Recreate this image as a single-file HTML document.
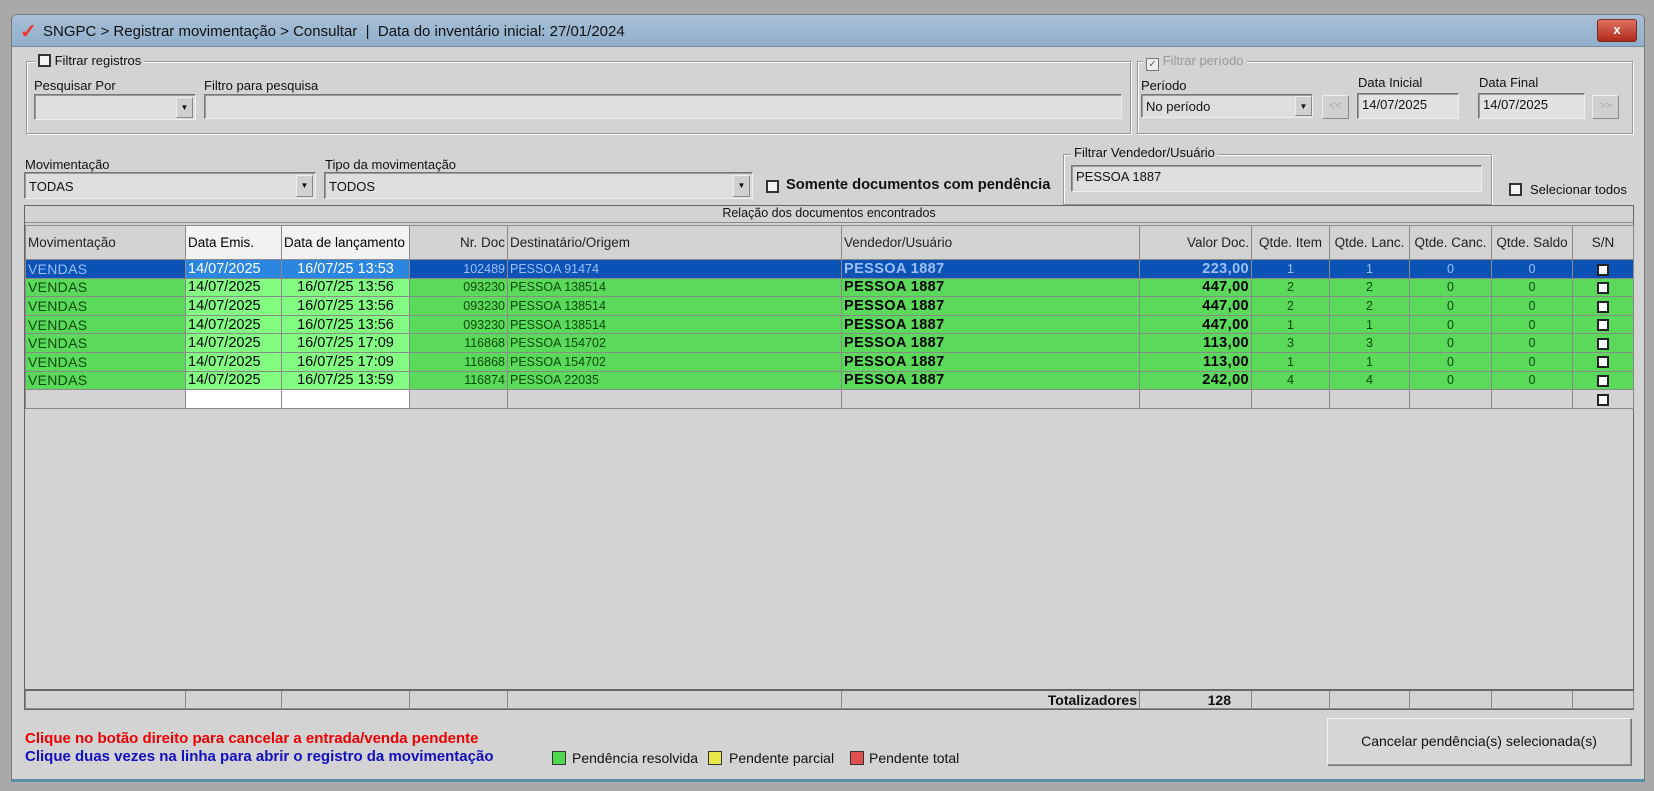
<!DOCTYPE html>
<html><head><meta charset="utf-8"><style>
*{box-sizing:border-box;margin:0;padding:0}
body{width:1654px;height:791px;background:#a9a9a9;font-family:"Liberation Sans",sans-serif;font-size:13px;color:#111;position:relative;overflow:hidden}
.a{position:absolute}
.win{left:11px;top:14px;width:1634px;height:768px;background:#d3d3d3;border:1px solid #777;border-radius:6px 6px 0 0;border-bottom:3px solid #5a8fa8}
.title{left:12px;top:15px;width:1632px;height:32px;background:linear-gradient(#a8bfd6,#90afcc);border-radius:5px 5px 0 0;border-bottom:1px solid #7a8ea0}
.grp{border:1px solid #999;box-shadow:inset 1px 1px 0 #fff,1px 1px 0 #fff}
.lg{background:#d3d3d3;padding:0 3px;font-size:13px}
.inp{background:#dedede;border:1px solid #777;border-right-color:#eee;border-bottom-color:#eee;box-shadow:inset 1px 1px 0 #999;padding:3px 4px;font-size:13px}
.dd{width:17px;background:#d0d0d0;border:1px solid #888;border-top-color:#eee;border-left-color:#eee;font-size:8px;text-align:center;line-height:20px}
.cb{width:13px;height:13px;border:2px solid #333;background:#f4f4f4}
table{border-collapse:collapse;table-layout:fixed;position:absolute;left:25px;font-size:12.5px}
td{border:1px solid #8a8a8a;height:18.6px;padding:0 2px;white-space:nowrap;overflow:hidden}
td.d{font-size:14.5px;line-height:16px}
td.v{font-size:14px;letter-spacing:.3px}
.sel td{background:#0b52b6;color:#9cc0ff}
.sel td.d{background:#2a86e0;color:#fff}
.g td{background:#5bd95b;color:#0a4a0a}
.g td.d{background:#82fd82;color:#000}
.g td.b,.sel td.b{font-weight:bold;font-size:14.5px;letter-spacing:.4px;line-height:16px}
.g td.b{color:#000}
.r{text-align:right}.c{text-align:center}
.sq{display:inline-block;width:12px;height:12px;border:2px solid #222;background:#fff;vertical-align:middle}
.hd td{height:34px;background:#d3d3d3;color:#222;font-size:13.5px}
.hd td.w{background:#f2f2f2;color:#000}
</style></head><body>
<div class="a win"></div>
<div class="a title"></div>
<div class="a" style="left:20px;top:19px;color:#e33;font-size:20px;font-weight:bold">✓</div>
<div class="a" style="left:43px;top:23px;font-size:15px;color:#111">SNGPC &gt; Registrar movimentação &gt; Consultar &nbsp;| &nbsp;Data do inventário inicial: 27/01/2024</div>
<div class="a" style="left:1597px;top:19px;width:40px;height:23px;background:linear-gradient(#e07060,#b02a1a);border:1px solid #7a2a20;border-radius:3px;color:#fff;text-align:center;font-weight:bold;line-height:20px">x</div>

<div class="a grp" style="left:26px;top:61px;width:1105px;height:73px"></div>
<div class="a lg" style="left:35px;top:53px"><span class="cb" style="display:inline-block;vertical-align:-2px"></span> Filtrar registros</div>
<div class="a" style="left:34px;top:78px">Pesquisar Por</div>
<div class="a" style="left:204px;top:78px">Filtro para pesquisa</div>
<div class="a inp" style="left:34px;top:94px;width:162px;height:26px"></div>
<div class="a dd" style="left:176px;top:97px;height:21px">▼</div>
<div class="a inp" style="left:204px;top:94px;width:918px;height:25px"></div>

<div class="a grp" style="left:1137px;top:61px;width:496px;height:73px"></div>
<div class="a lg" style="left:1143px;top:53px;color:#999"><span style="display:inline-block;vertical-align:-2px;width:13px;height:13px;border:1px solid #777;background:#eee;font-size:10px;line-height:11px;text-align:center;color:#666">✓</span> Filtrar período</div>
<div class="a" style="left:1141px;top:78px">Período</div>
<div class="a" style="left:1358px;top:75px">Data Inicial</div>
<div class="a" style="left:1479px;top:75px">Data Final</div>
<div class="a inp" style="left:1141px;top:94px;width:172px;height:24px;padding-top:4px">No período</div>
<div class="a dd" style="left:1295px;top:96px;height:20px">▼</div>
<div class="a dd" style="left:1322px;top:95px;width:27px;height:24px;color:#aaa;font-size:11px">&lt;&lt;</div>
<div class="a inp" style="left:1357px;top:93px;width:102px;height:26px;background:#e2e2e2">14/07/2025</div>
<div class="a inp" style="left:1478px;top:93px;width:107px;height:26px;background:#e2e2e2">14/07/2025</div>
<div class="a dd" style="left:1592px;top:95px;width:27px;height:24px;color:#aaa;font-size:11px">&gt;&gt;</div>

<div class="a" style="left:25px;top:157px">Movimentação</div>
<div class="a" style="left:325px;top:157px">Tipo da movimentação</div>
<div class="a inp" style="left:24px;top:172px;width:292px;height:27px;padding-top:6px">TODAS</div>
<div class="a dd" style="left:296px;top:175px;height:22px">▼</div>
<div class="a inp" style="left:324px;top:172px;width:429px;height:27px;padding-top:6px">TODOS</div>
<div class="a dd" style="left:733px;top:175px;height:22px">▼</div>
<div class="a cb" style="left:766px;top:180px"></div>
<div class="a" style="left:786px;top:177px;font-weight:bold;font-size:14.7px">Somente documentos com pendência</div>
<div class="a grp" style="left:1063px;top:154px;width:429px;height:51px"></div>
<div class="a lg" style="left:1071px;top:145px">Filtrar Vendedor/Usuário</div>
<div class="a inp" style="left:1071px;top:165px;width:411px;height:27px">PESSOA 1887</div>
<div class="a cb" style="left:1509px;top:183px"></div>
<div class="a" style="left:1530px;top:182px">Selecionar todos</div>

<div class="a" style="left:24px;top:205px;width:1610px;height:505px;border:1px solid #666;background:#d3d3d3"></div>
<div class="a" style="left:25px;top:206px;width:1608px;height:17px;border-bottom:1px solid #888;text-align:center;font-size:12.5px">Relação dos documentos encontrados</div>
<table style="top:225px;width:1608px">
<colgroup><col style="width:160px"><col style="width:96px"><col style="width:128px"><col style="width:98px"><col style="width:334px"><col style="width:298px"><col style="width:112px"><col style="width:78px"><col style="width:80px"><col style="width:82px"><col style="width:81px"><col style="width:61px"></colgroup>
<tr class="hd"><td>Movimentação</td><td class="w">Data Emis.</td><td class="w">Data de lançamento</td><td class="r">Nr. Doc</td><td>Destinatário/Origem</td><td>Vendedor/Usuário</td><td class="r">Valor Doc.</td><td class="c">Qtde. Item</td><td class="c">Qtde. Lanc.</td><td class="c">Qtde. Canc.</td><td class="c">Qtde. Saldo</td><td class="c">S/N</td></tr>
<tr class="sel"><td class="v">VENDAS</td><td class="d">14/07/2025</td><td class="d c">16/07/25 13:53</td><td class="r">102489</td><td>PESSOA 91474</td><td class="b">PESSOA 1887</td><td class="r b">223,00</td><td class="c">1</td><td class="c">1</td><td class="c">0</td><td class="c">0</td><td class="c"><span class="sq"></span></td></tr>
<tr class="g"><td class="v">VENDAS</td><td class="d">14/07/2025</td><td class="d c">16/07/25 13:56</td><td class="r">093230</td><td>PESSOA 138514</td><td class="b">PESSOA 1887</td><td class="r b">447,00</td><td class="c">2</td><td class="c">2</td><td class="c">0</td><td class="c">0</td><td class="c"><span class="sq"></span></td></tr>
<tr class="g"><td class="v">VENDAS</td><td class="d">14/07/2025</td><td class="d c">16/07/25 13:56</td><td class="r">093230</td><td>PESSOA 138514</td><td class="b">PESSOA 1887</td><td class="r b">447,00</td><td class="c">2</td><td class="c">2</td><td class="c">0</td><td class="c">0</td><td class="c"><span class="sq"></span></td></tr>
<tr class="g"><td class="v">VENDAS</td><td class="d">14/07/2025</td><td class="d c">16/07/25 13:56</td><td class="r">093230</td><td>PESSOA 138514</td><td class="b">PESSOA 1887</td><td class="r b">447,00</td><td class="c">1</td><td class="c">1</td><td class="c">0</td><td class="c">0</td><td class="c"><span class="sq"></span></td></tr>
<tr class="g"><td class="v">VENDAS</td><td class="d">14/07/2025</td><td class="d c">16/07/25 17:09</td><td class="r">116868</td><td>PESSOA 154702</td><td class="b">PESSOA 1887</td><td class="r b">113,00</td><td class="c">3</td><td class="c">3</td><td class="c">0</td><td class="c">0</td><td class="c"><span class="sq"></span></td></tr>
<tr class="g"><td class="v">VENDAS</td><td class="d">14/07/2025</td><td class="d c">16/07/25 17:09</td><td class="r">116868</td><td>PESSOA 154702</td><td class="b">PESSOA 1887</td><td class="r b">113,00</td><td class="c">1</td><td class="c">1</td><td class="c">0</td><td class="c">0</td><td class="c"><span class="sq"></span></td></tr>
<tr class="g"><td class="v">VENDAS</td><td class="d">14/07/2025</td><td class="d c">16/07/25 13:59</td><td class="r">116874</td><td>PESSOA 22035</td><td class="b">PESSOA 1887</td><td class="r b">242,00</td><td class="c">4</td><td class="c">4</td><td class="c">0</td><td class="c">0</td><td class="c"><span class="sq"></span></td></tr>
<tr><td></td><td style="background:#fff"></td><td style="background:#fff"></td><td></td><td></td><td></td><td></td><td></td><td></td><td></td><td></td><td class="c"><span class="sq"></span></td></tr>
</table>
<table style="top:689px;width:1608px;border-top:2px solid #666">
<colgroup><col style="width:160px"><col style="width:96px"><col style="width:128px"><col style="width:98px"><col style="width:334px"><col style="width:298px"><col style="width:112px"><col style="width:78px"><col style="width:80px"><col style="width:82px"><col style="width:81px"><col style="width:61px"></colgroup>
<tr><td></td><td></td><td></td><td></td><td></td><td class="r" style="font-weight:bold;font-size:14px">Totalizadores</td><td class="r" style="font-weight:bold;font-size:14px;padding-right:20px">128</td><td></td><td></td><td></td><td></td><td></td></tr>
</table>

<div class="a" style="left:25px;top:730px;color:#e00;font-weight:bold;font-size:15px">Clique no botão direito para cancelar a entrada/venda pendente</div>
<div class="a" style="left:25px;top:748px;color:#1010c0;font-weight:bold;font-size:15px">Clique duas vezes na linha para abrir o registro da movimentação</div>
<div class="a" style="left:552px;top:751px;width:14px;height:14px;background:#4fd84f;border:1px solid #333"></div>
<div class="a" style="left:572px;top:750px;font-size:14px">Pendência resolvida</div>
<div class="a" style="left:708px;top:751px;width:14px;height:14px;background:#e8e84a;border:1px solid #333"></div>
<div class="a" style="left:729px;top:750px;font-size:14px">Pendente parcial</div>
<div class="a" style="left:850px;top:751px;width:14px;height:14px;background:#e05050;border:1px solid #333"></div>
<div class="a" style="left:869px;top:750px;font-size:14px">Pendente total</div>
<div class="a" style="left:1327px;top:718px;width:304px;height:47px;background:#d6d6d6;border:1px solid #999;border-top-color:#f4f4f4;border-left-color:#f4f4f4;box-shadow:1px 1px 0 #777;text-align:center;line-height:45px;font-size:14px">Cancelar pendência(s) selecionada(s)</div>
</body></html>
